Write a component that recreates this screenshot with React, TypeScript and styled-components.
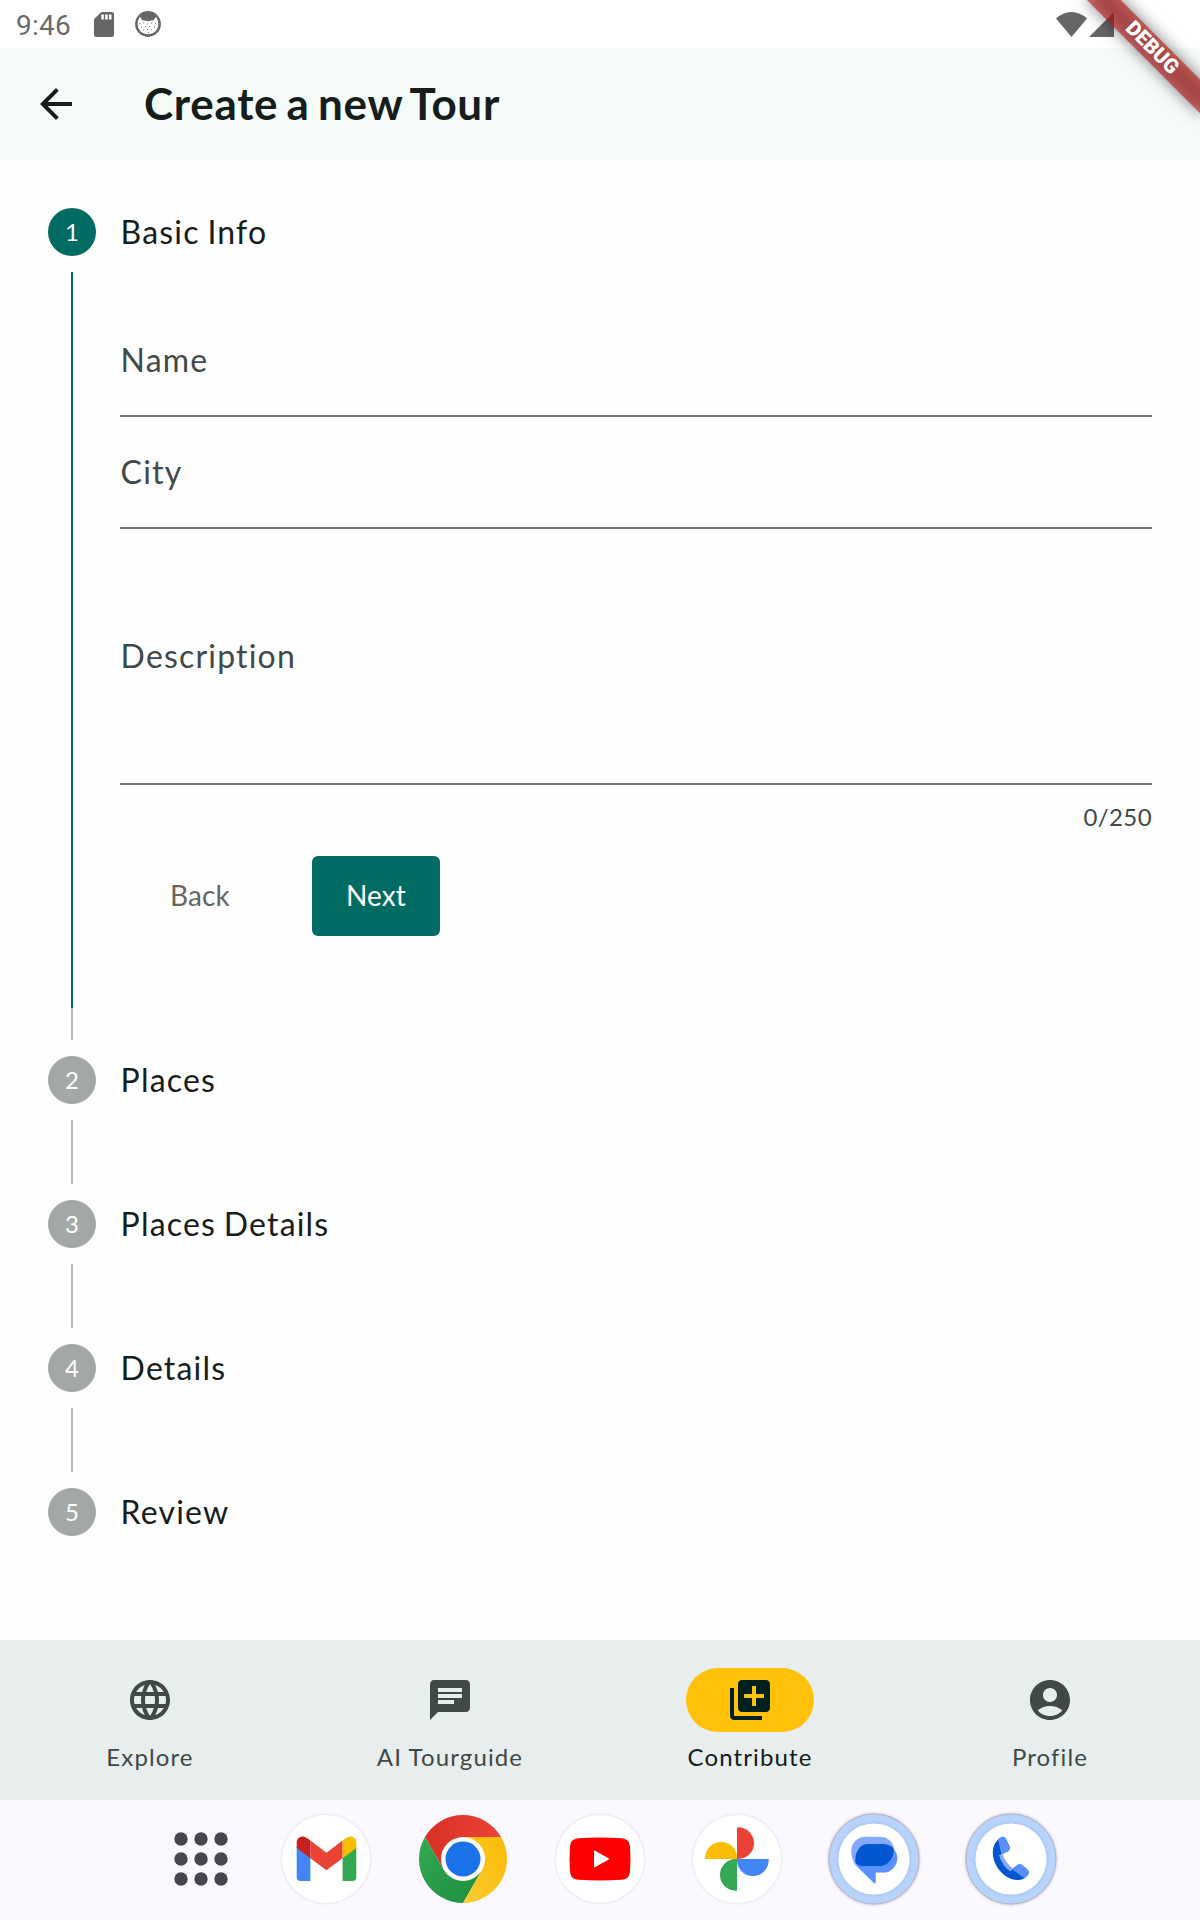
import React from "react";
import styled, { createGlobalStyle } from "styled-components";
import {
  MdAccountCircle,
  MdArrowBack,
  MdChat,
  MdLanguage,
  MdQueue,
} from "react-icons/md";

const GlobalStyle = createGlobalStyle`
  * { box-sizing: border-box; }
  body { margin: 0; background: #fff; font-family: Lato, "Open Sans", sans-serif; }
  button { font: inherit; border: 0; background: none; padding: 0; }
`;

const Screen = styled.div`
  position: relative;
  display: flex;
  flex-direction: column;
  width: 1200px;
  height: 1920px;
  overflow: hidden;
  background: #fefefe;
`;

const StatusBar = styled.div`
  display: flex;
  justify-content: space-between;
  height: 48px;
  padding: 0 86px 0 16px;
  background: #fff;
`;

const StatusGroup = styled.div<{ $gap?: number }>`
  display: flex;
  align-items: center;
  gap: ${(p) => p.$gap ?? 0}px;
`;

const Clock = styled.span`
  margin-right: 23px;
  padding-top: 3px;
  color: #6a6a6a;
  font: 28px/32px Roboto, sans-serif;
  letter-spacing: 0.25px;
`;

const AppBar = styled.header`
  display: flex;
  align-items: center;
  height: 112px;
  padding-left: 32px;
  gap: 64px;
  background: #f4fbf8;
  color: #161d1b;
`;

const BackArrow = styled.button`
  display: flex;
  width: 48px;
  height: 48px;
  color: inherit;
`;

const Title = styled.h1`
  margin: 0;
  padding-bottom: 2px;
  font-size: 44px;
  font-weight: 700;
  line-height: 56px;
  letter-spacing: 0.7px;
  word-spacing: -3px;
`;

const Stepper = styled.main`
  flex: 1;
  padding: 48px 48px 0;
`;

const StepHeader = styled.div`
  display: flex;
  align-items: center;
  height: 48px;
  gap: 24.600px;
`;

const StepCircle = styled.div<{ $active?: boolean }>`
  display: flex;
  align-items: center;
  justify-content: center;
  width: 48px;
  height: 48px;
  border-radius: 50%;
  background: ${(p) => (p.$active ? "#006b63" : "#a4a8a7")};
  color: #fff;
  font-size: 24px;
  line-height: 28px;
`;

const StepLabel = styled.span`
  color: #161d1b;
  font-size: 32px;
  line-height: 48px;
  letter-spacing: 1.18px;
  word-spacing: -1.6px;
`;

const StepBody = styled.div`
  display: flex;
  height: 736px;
  margin-top: 16px;
  margin-left: 23px;
  border-left: 2px solid #006b63;
  padding-left: 47px;
`;

const Connector = styled.div<{ $height: number; $top?: number }>`
  width: 2px;
  height: ${(p) => p.$height}px;
  margin: ${(p) => p.$top ?? 16}px 0 16px 23px;
  background: #b9bbbb;
`;

const Form = styled.div`
  flex: 1;
  padding-top: 33px;
`;

const Field = styled.label<{ $height: number }>`
  display: flex;
  align-items: center;
  height: ${(p) => p.$height}px;
  padding-left: 0.600px;
  border-bottom: 2px solid #6f7977;
  color: #3f4947;
  font-size: 32px;
  line-height: 48px;
  letter-spacing: 1.18px;
`;

const Counter = styled.div`
  margin-top: 16px;
  color: #3f4947;
  font-size: 24px;
  line-height: 32px;
  letter-spacing: 0.4px;
  text-align: right;
`;

const Actions = styled.div`
  display: flex;
  gap: 32px;
  margin-top: 23px;
`;

const ActionButton = styled.button<{ $primary?: boolean }>`
  width: ${(p) => (p.$primary ? 128 : 160)}px;
  height: 80px;
  padding-bottom: 2px;
  border-radius: 6px;
  background: ${(p) => (p.$primary ? "#006b63" : "transparent")};
  color: ${(p) => (p.$primary ? "#fff" : "#656565")};
  font-size: 28px;
  line-height: 40px;
  letter-spacing: 0.15px;
`;

const NavBar = styled.nav`
  display: grid;
  grid-template-columns: repeat(4, 1fr);
  height: 160px;
  padding-top: 28px;
  background: #e8eeed;
`;

const NavItem = styled.div<{ $active?: boolean }>`
  display: flex;
  flex-direction: column;
  align-items: center;
  gap: 9px;
  color: ${(p) => (p.$active ? "#161d1b" : "#3f4947")};
  font-size: 24px;
  line-height: 32px;
  letter-spacing: 1.12px;
`;

const Indicator = styled.div<{ $active?: boolean }>`
  display: flex;
  align-items: center;
  justify-content: center;
  width: 128px;
  height: 64px;
  border-radius: 32px;
  background: ${(p) => (p.$active ? "#ffc10a" : "transparent")};
  color: ${(p) => (p.$active ? "#00201d" : "#3f4947")};
`;

const Dock = styled.footer`
  display: flex;
  align-items: center;
  gap: 41px;
  height: 120px;
  padding: 0 0 2px 153px;
  background: #fbf8ff;
`;

const DockIcon = styled.svg<{ $tight?: boolean }>`
  width: 96px;
  height: 96px;
  margin-right: ${(p) => (p.$tight ? -12 : 0)}px;
  flex: none;
  overflow: visible;
`;

const BannerCorner = styled.div`
  position: absolute;
  top: 0;
  right: 0;
  width: 0;
  height: 0;
  transform: rotate(45deg);
`;

const BannerShadow = styled.div`
  position: absolute;
  top: 56px;
  left: -80px;
  width: 160px;
  height: 24px;
  background: rgba(0, 0, 0, 0.5);
  filter: blur(8px);
`;

const BannerRibbon = styled.div`
  position: absolute;
  top: 56px;
  left: -80px;
  width: 160px;
  height: 24px;
  background: rgba(183, 28, 28, 0.627);
  color: #fff;
  font: 900 20.4px/22px Roboto, sans-serif;
  text-align: center;
`;

const WhiteDisc = () => (
  <circle cx="48" cy="48" r="44" fill="#fff" style={{ filter: "drop-shadow(0 0 1.5px rgba(60,60,80,.18))" }} />
);

const BadgeDisc = () => (
  <>
    <circle cx="48" cy="48" r="45" fill="#b8d4fe" stroke="#b3b5c2" strokeWidth="1" style={{ filter: "drop-shadow(0 0 1.5px rgba(60,60,80,.4))" }} />
    <circle cx="48" cy="48" r="35.6" fill="#fff" style={{ filter: "drop-shadow(0 0 2px rgba(50,90,160,.2))" }} />
  </>
);

const SdCard = () => (
  <svg width="20" height="25" viewBox="0 0 20 25">
    <path d="M7.300 0H17.800A2.200 2.200 0 0 1 20 2.200V22.800A2.200 2.200 0 0 1 17.800 25H2.200A2.200 2.200 0 0 1 0 22.800V7.300Z" fill="#666" />
    <path d="M7.300 2.500h2.500v5H7.300zM11.200 2.500h2.500v5h-2.500zM15 2.500h2.500v5h-2.500z" fill="#fff" />
  </svg>
);

const CatFace = () => (
  <svg width="26" height="26" viewBox="0 0 26 26">
    <circle cx="13" cy="13" r="12.900" fill="#666" />
    <path d="M4.700 6Q6.500 6.500 7.300 9.500Q9 8.800 10.500 9.700Q13 10.600 15.500 9.700Q17 8.800 18.700 9.500Q19.500 6.500 21.300 6Q23.600 9.500 23.300 13.500C23 19.500 18.500 23.300 13 23.300S3 19.500 2.700 13.500Q2.400 9.500 4.700 6Z" fill="#fff" />
    <path d="M4.500 12.500h1M8 12h1.200M12 13h1M16 12h1.200M20 12.500h1M6 16h1M10 15.500h1M14 15.500h1M19 16h1M8 19h1M12 18.500h1.200M16 19h1M13 21.500h1" stroke="#777" strokeWidth="1" />
  </svg>
);

const Wifi = () => (
  <svg width="31" height="25" viewBox="0 0 31 25">
    <path d="M0 6.500Q7 0 15.500 0T31 6.500L15.500 25Z" fill="#666" />
  </svg>
);

const Signal = () => (
  <svg width="25" height="25" viewBox="0 0 25 25">
    <path d="M25 0V25H0Z" fill="#666" />
  </svg>
);

const AppsIcon = () => (
  <DockIcon viewBox="0 0 96 96" $tight>
    {[28, 48, 68].map((y) =>
      [28, 48, 68].map((x) => <circle key={`${x}-${y}`} cx={x} cy={y} r="6.7" fill="#45464f" />)
    )}
  </DockIcon>
);

const GmailIcon = () => (
  <DockIcon viewBox="0 0 96 96">
    <WhiteDisc />
    <path d="M18.700 36L32.400 46V70H22.500A3.800 3.800 0 0 1 18.700 66.200Z" fill="#4285f4" />
    <path d="M64.600 46L78.300 36V66.200A3.800 3.800 0 0 1 74.500 70H64.600Z" fill="#34a853" />
    <path d="M32.400 29.500L48.500 41.700L64.600 29.500V47.200L48.500 59.300L32.400 47.200Z" fill="#ea4335" />
    <path d="M18.700 37V31.300C18.700 26 24.500 23.500 29 27L32.400 29.500V47.200Z" fill="#c5221f" />
    <path d="M64.600 29.500L68 27C72.500 23.500 78.300 26 78.300 31.300V37L64.600 47.200Z" fill="#fbbc04" />
  </DockIcon>
);

const ChromeIcon = () => (
  <DockIcon viewBox="0 0 96 96">
    <defs>
      <linearGradient id="cr" x1="0" x2="1"><stop stopColor="#d93025" /><stop offset="1" stopColor="#ea4335" /></linearGradient>
      <linearGradient id="cg" x1="1" y1="1" x2="0" y2="0"><stop stopColor="#1e8e3e" /><stop offset="1" stopColor="#34a853" /></linearGradient>
      <linearGradient id="cy" x1="0" y1="1" x2="1" y2="0"><stop stopColor="#fcc934" /><stop offset="1" stopColor="#fbbc04" /></linearGradient>
    </defs>
    <path d="M48 48L28.950 59L9.900 26A44 44 0 0 1 86.100 26H48Z" fill="url(#cr)" />
    <path d="M9.900 26A44 44 0 0 0 48 92L67.050 59L48 48L28.950 59Z" fill="url(#cg)" />
    <path d="M48 26H86.100A44 44 0 0 1 48 92L67.050 59L48 48Z" fill="url(#cy)" />
    <circle cx="48" cy="48" r="22" fill="#fff" />
    <circle cx="48" cy="48" r="17.500" fill="#1a73e8" />
  </DockIcon>
);

const YouTubeIcon = () => (
  <DockIcon viewBox="0 0 96 96">
    <WhiteDisc />
    <path d="M27 27.200Q48 25.600 69 27.200C75 27.600 77.600 30 78 36Q79 48 78 60C77.600 66 75 68.400 69 68.800Q48 70.400 27 68.800C21 68.400 18.400 66 18 60Q17 48 18 36C18.400 30 21 27.600 27 27.200Z" fill="#f00" />
    <path d="M42 39.200L57.700 48L42 56.800Z" fill="#fff" />
  </DockIcon>
);

const PhotosIcon = () => (
  <DockIcon viewBox="0 0 96 96">
    <WhiteDisc />
    <path d="M48 48V17.500Q48 16.300 49.200 16.300A15.850 15.850 0 0 1 49.200 48Z" fill="#ea4335" />
    <path d="M48 48H79.700V49.200A15.850 15.850 0 0 1 48 49.200Z" fill="#4285f4" />
    <path d="M48 48V79.700H46.800A15.850 15.850 0 0 1 46.800 48Z" fill="#34a853" />
    <path d="M48 48H16.300V46.800A15.850 15.850 0 0 1 48 46.800Z" fill="#fbbc04" />
  </DockIcon>
);

const MessagesIcon = () => (
  <DockIcon viewBox="0 0 96 96">
    <BadgeDisc />
    <path d="M43 33H57A14.300 14.300 0 0 1 57 61.600H49.700V71Q49.700 73.600 47.500 71.800L31 55.500C24 48 29 33 43 33Z" fill="#598ffe" />
    <path d="M39.500 25.800H54C62 25.800 68.300 32 68.300 40C68.300 48 62 54.500 54 54.500H30Q25.200 49 25.200 40C25.200 32 31.500 25.800 39.500 25.800Z" fill="#85a9ff" />
    <path d="M42 33H57Q63 33 67.300 37C69.500 46 62 55 54 55H36.500Q32 55 29.500 52C28 41 34 33 42 33Z" fill="#0057d0" />
  </DockIcon>
);

const PhoneIcon = () => (
  <DockIcon viewBox="0 0 96 96">
    <BadgeDisc />
    <path d="M35 28.500C40 24 42 25.500 43.500 29L46.500 35.500C47.300 38 46.500 39 44.500 40.500L36.200 44.500Q41 54 47.500 59.500L54.500 54Q57 52.500 59.500 54.500L64.500 58.500C66.500 60.500 66 63 64 65L61 67.500C52 72 41 66 35 57.500C28 47 28 35 35 28.500Z" fill="#0057d0" />
    <path d="M35 28.500C40 24 42 25.500 43.500 29L46.500 35.500C47.300 38 46.500 39 44.500 40.500L38.500 43.500Z" fill="#598ffe" />
    <path d="M49 58.300L54.500 54Q57 52.500 59.500 54.500L64.500 58.500C66.500 60.500 66 63 64 65L61.500 67.200Z" fill="#598ffe" />
    <path d="M36.200 44.500L39.300 43Q43 52.500 50 57.600L47.200 60.500Q39 54.500 36.200 44.500Z" fill="#85a9ff" />
  </DockIcon>
);

const laterSteps = ["Places", "Places Details", "Details", "Review"];

const navItems = [
  { label: "Explore", Icon: MdLanguage },
  { label: "AI Tourguide", Icon: MdChat },
  { label: "Contribute", Icon: MdQueue, active: true },
  { label: "Profile", Icon: MdAccountCircle },
];

export default function App() {
  return (
    <>
      <GlobalStyle />
      <Screen>
        <StatusBar>
          <StatusGroup>
            <Clock>9:46</Clock>
            <StatusGroup $gap={21}>
              <SdCard />
              <CatFace />
            </StatusGroup>
          </StatusGroup>
          <StatusGroup $gap={2}>
            <Wifi />
            <Signal />
          </StatusGroup>
        </StatusBar>

        <AppBar>
          <BackArrow aria-label="Back">
            <MdArrowBack size={48} />
          </BackArrow>
          <Title>Create a new Tour</Title>
        </AppBar>

        <Stepper>
          <StepHeader>
            <StepCircle $active>1</StepCircle>
            <StepLabel>Basic Info</StepLabel>
          </StepHeader>
          <StepBody>
            <Form>
              <Field $height={112}>Name</Field>
              <Field $height={112}>City</Field>
              <Field $height={256}>Description</Field>
              <Counter>0/250</Counter>
              <Actions>
                <ActionButton>Back</ActionButton>
                <ActionButton $primary>Next</ActionButton>
              </Actions>
            </Form>
          </StepBody>
          <Connector $height={32} $top={0} />
          {laterSteps.map((label, i) => (
            <React.Fragment key={label}>
              <StepHeader>
                <StepCircle>{i + 2}</StepCircle>
                <StepLabel>{label}</StepLabel>
              </StepHeader>
              {i < laterSteps.length - 1 && <Connector $height={64} />}
            </React.Fragment>
          ))}
        </Stepper>

        <NavBar>
          {navItems.map(({ label, Icon, active }) => (
            <NavItem key={label} $active={active}>
              <Indicator $active={active}>
                <Icon size={48} />
              </Indicator>
              <span>{label}</span>
            </NavItem>
          ))}
        </NavBar>

        <Dock>
          <AppsIcon />
          <GmailIcon />
          <ChromeIcon />
          <YouTubeIcon />
          <PhotosIcon />
          <MessagesIcon />
          <PhoneIcon />
        </Dock>

        <BannerCorner>
          <BannerShadow />
          <BannerRibbon>DEBUG</BannerRibbon>
        </BannerCorner>
      </Screen>
    </>
  );
}
